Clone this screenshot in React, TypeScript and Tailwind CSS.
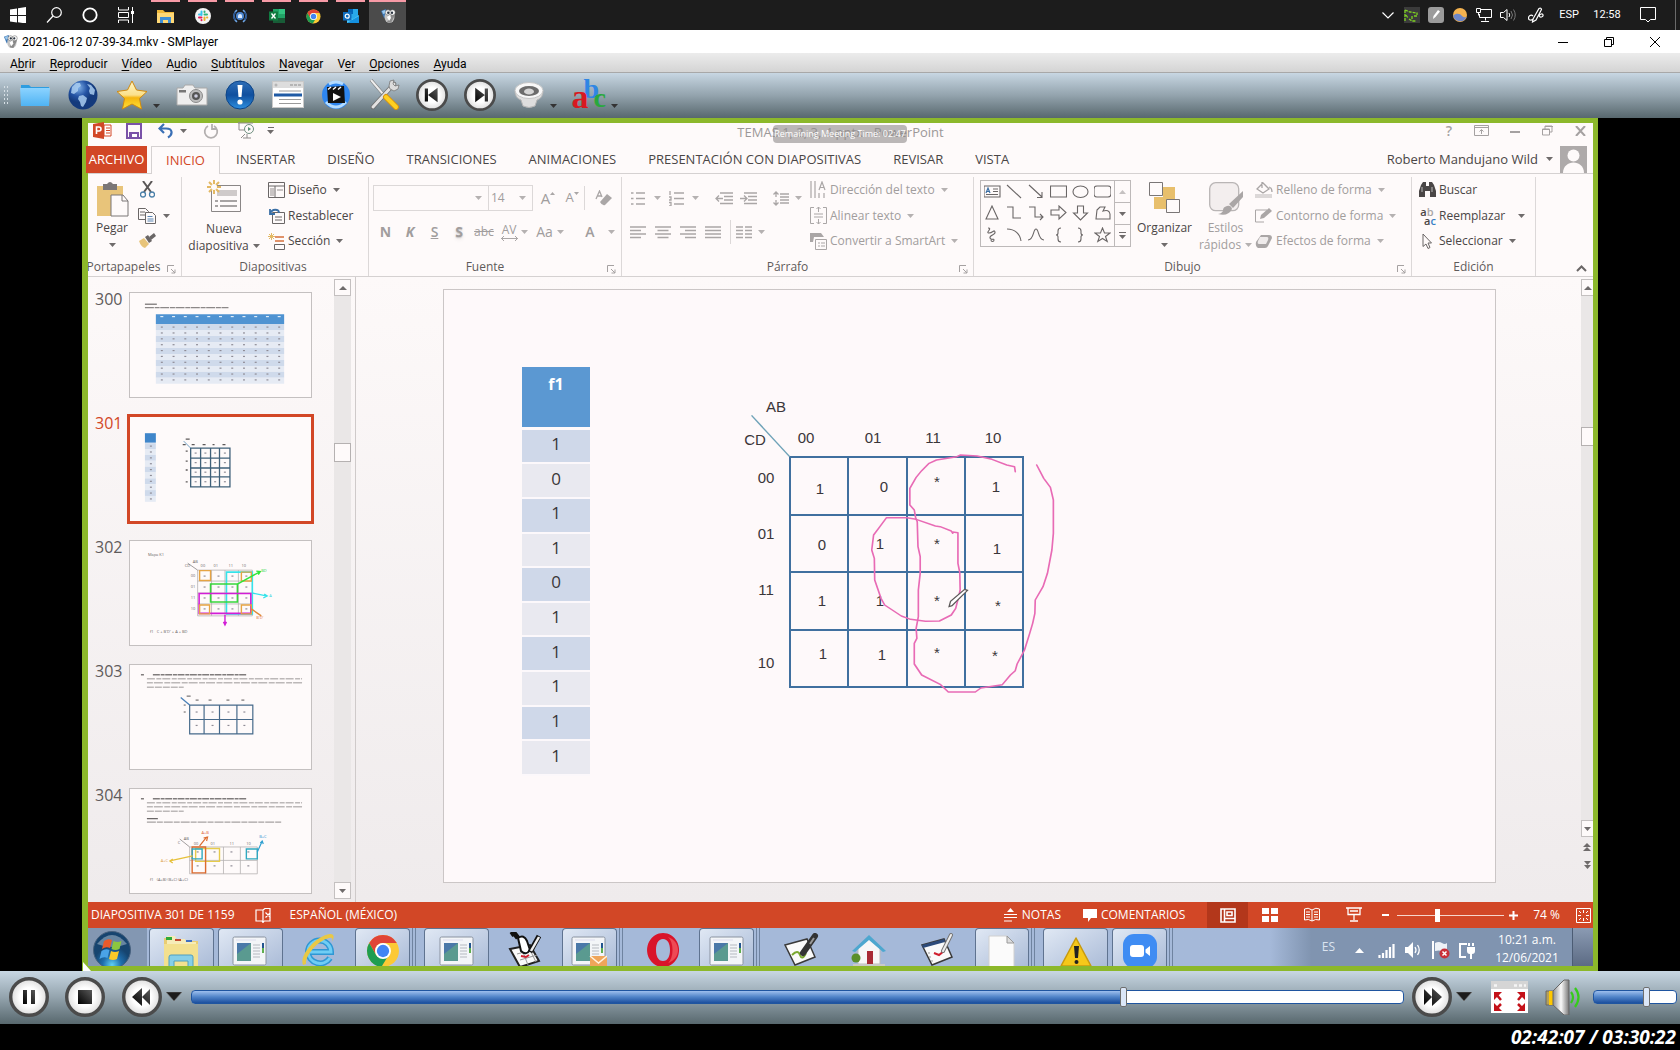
import React from "react";

type P = { children?: React.ReactNode; w?: number; h?: number; vb?: string; className?: string };

function Svg({ children, w = 16, h = 16, vb, className = "" }: P) {
  return (
    <svg width={w} height={h} viewBox={vb || `0 0 ${w} ${h}`} className={`shrink-0 ${className}`} fill="none" aria-hidden="true">
      {children}
    </svg>
  );
}

const Chev = ({ className = "text-[#6f6b6b]" }: { className?: string }) => (
  <Svg w={7} h={4} className={className}>
    <path d="M0 0h7L3.500 4z" fill="currentColor" />
  </Svg>
);

/* ---------- Windows 10 taskbar ---------- */

const SmpIcon = ({ s = 16 }: { s?: number }) => (
  <Svg w={s} h={s} vb="0 0 16 16">
    <path d="M1 3l5-2 2 6-4 3z" fill="#3f78b5" />
    <path d="M2 3l3-1 1 3-3 1z" fill="#9cc9ee" />
    <ellipse cx="9.500" cy="9" rx="5" ry="6" fill="#c4c4c4" />
    <path d="M7 14l6-10 2 3-4 8z" fill="#8a8a8a" />
    <circle cx="8" cy="4.500" r="2.700" fill="#f2f2f2" stroke="#555" strokeWidth=".5" />
    <circle cx="12.500" cy="4.500" r="2.700" fill="#fff" stroke="#555" strokeWidth=".5" />
    <circle cx="8.300" cy="4.700" r="1.200" fill="#2a3440" />
    <circle cx="12" cy="4.700" r="1.200" fill="#2a3440" />
    <path d="M7 9l3-2 1 3-2 3z" fill="#fff" />
  </Svg>
);

const ChromeIcon = ({ s = 16 }: { s?: number }) => (
  <Svg w={s} h={s} vb="0 0 32 32">
    <circle cx="16" cy="16" r="15" fill="#fcc934" />
    <path d="M3 8.500A15 15 0 0 1 29 8.500H16a7.500 7.500 0 0 0-6.500 11.200z" fill="#e04437" />
    <path d="M3 8.500A15 15 0 0 0 14.500 31l7-11.500A7.500 7.500 0 0 1 9.500 19.700z" fill="#1e9d52" />
    <circle cx="16" cy="16" r="7.500" fill="#fff" />
    <circle cx="16" cy="16" r="5.800" fill="#4285f4" />
  </Svg>
);

const pinned: { name: string; icon: React.ReactNode; active?: boolean }[] = [
  {
    name: "Explorador de archivos",
    icon: (
      <Svg w={17} h={15}>
        <path d="M0 1h6l2 2h9v11H0z" fill="#f0b93a" />
        <path d="M0 4h17v10H0z" fill="#ffd976" />
        <path d="M3 14V8h11v6h-3v-3H6v3z" fill="#3f8fd6" />
      </Svg>
    ),
  },
  {
    name: "Slack",
    icon: (
      <Svg>
        <circle cx="8" cy="8" r="8" fill="#f4f4f4" />
        <g strokeWidth="2" strokeLinecap="round">
          <path d="M6.500 3.500v3.500M4 6.500h1" stroke="#36c5f0" />
          <path d="M9.500 6.500H12M9.500 3.500v.5" stroke="#2eb67d" />
          <path d="M9.500 9.500V12M12 9.500h.3" stroke="#ecb22e" />
          <path d="M6.500 9.500H4M6.500 12v.3" stroke="#e01e5a" />
        </g>
      </Svg>
    ),
  },
  {
    name: "Monitor",
    icon: (
      <Svg>
        <path d="M5 2C1 5 1 11 5 14M11 2c4 3 4 9 0 12" stroke="#6fa8e8" strokeWidth="1.500" />
        <path d="M3.500 4c-2 3-2 6 0 8M12.500 4c2 3 2 6 0 8" stroke="#27508a" strokeWidth="1.500" />
        <circle cx="8" cy="8" r="4" fill="#4c86d0" />
        <path d="M6 8a2 2 0 0 1 4 0v2H6z" fill="#dcecff" />
      </Svg>
    ),
  },
  {
    name: "Excel",
    icon: (
      <Svg>
        <path d="M4 1h12v14H4z" fill="#21a366" />
        <path d="M10 1h6v5h-6z" fill="#33c481" />
        <path d="M4 10h12v5H4z" fill="#185c37" />
        <rect y="3.500" width="9" height="9" fill="#107c41" />
        <path d="M2.500 5.500l4 5M6.500 5.500l-4 5" stroke="#fff" strokeWidth="1.300" />
      </Svg>
    ),
  },
  { name: "Chrome", icon: <ChromeIcon s={15} /> },
  {
    name: "Outlook",
    icon: (
      <Svg>
        <path d="M5 1h10v10H5z" fill="#28a8ea" />
        <path d="M5 1h5v5H5z" fill="#0364b8" />
        <path d="M4 7l6 4 6-4v8H4z" fill="#50c8f5" />
        <path d="M4 15l12-7v7z" fill="#1490df" />
        <rect y="4" width="8.500" height="8.500" fill="#0f6cbd" />
        <circle cx="4.200" cy="8.200" r="2" stroke="#fff" strokeWidth="1.200" />
      </Svg>
    ),
  },
  { name: "SMPlayer", icon: <SmpIcon />, active: true },
];

function SystemBar() {
  const sys = "flex h-full w-9 items-center justify-center";
  const tray = "flex h-full w-6 items-center justify-center";
  return (
    <header className="flex h-[30px] shrink-0 items-center bg-[#1c1c1c] text-[11px] text-white">
      <button aria-label="Inicio" className={sys}>
        <Svg>
          <path d="M0 2.500l7-1V8H0zM8 1.300L16 0v8H8zM0 9h7v6.500l-7-1zM8 9h8v7.500L8 15.300z" fill="#fff" />
        </Svg>
      </button>
      <button aria-label="Buscar" className={sys}>
        <Svg>
          <circle cx="10.500" cy="5.500" r="4.800" stroke="#fff" strokeWidth="1.200" />
          <path d="M7 9l-6 6.500" stroke="#fff" strokeWidth="1.200" />
        </Svg>
      </button>
      <button aria-label="Cortana" className={sys}>
        <Svg>
          <circle cx="8" cy="8" r="6.700" stroke="#fff" strokeWidth="1.800" />
        </Svg>
      </button>
      <button aria-label="Vista de tareas" className={sys}>
        <Svg>
          <path d="M.5 0v3h10V0M.5 16v-3h10v3M.5 5.500h10v5H.5zM14.500 0v16" stroke="#fff" />
          <path d="M13 4h3v3h-3z" fill="#fff" />
        </Svg>
      </button>
      <nav className="ml-[3px] flex h-full">
        {pinned.map((p) => (
          <button
            key={p.name}
            aria-label={p.name}
            className={
              p.active
                ? "flex w-[37px] items-center justify-center border-t-2 border-[#f79aa6] bg-[#4b4b4b]"
                : "mx-1 flex w-[29px] items-center justify-center border-t-2 border-[#f79aa6]"
            }
          >
            {p.icon}
          </button>
        ))}
      </nav>
      <div className="ml-auto flex h-full items-center">
        <button aria-label="Iconos ocultos" className={tray}>
          <Svg w={12} h={7}>
            <path d="M.5 .5L6 6 11.500 .5" stroke="#fff" strokeWidth="1.200" />
          </Svg>
        </button>
        <span className={tray}>
          <Svg>
            <path d="M0 0h16v16H0z" fill="#3b3b3b" />
            <path d="M1 14V3M1 3l5 2 7 1 0 2M2 8l2 3M5 12l3 2h4M8 9v3M10 9h4" stroke="#7ed321" strokeWidth="1.300" strokeDasharray="3 1" />
          </Svg>
        </span>
        <span className={tray}>
          <Svg>
            <rect width="16" height="16" rx="3" fill="#9b9b9b" />
            <path d="M5 12l.5-3L10 3l2 1.500L7.500 10z" fill="#fff" />
          </Svg>
        </span>
        <span className={tray}>
          <Svg>
            <circle cx="8" cy="8" r="7" fill="#f4b350" />
            <path d="M1.200 8.500C4 6 8 6 10 9c1.500 1.500 3 1.500 4.500 1A7 7 0 0 1 1.200 8.500z" fill="#6c86c8" />
          </Svg>
        </span>
        <span className={tray}>
          <Svg>
            <path d="M5 2.500h10.500v8H3.500V7M.5 1.500h4v4h-4zM2.500 5.500v3M9.500 10.500v3M5 14.500h8" stroke="#fff" />
          </Svg>
        </span>
        <span className={tray}>
          <Svg>
            <path d="M.5 5.500h3l3.500-3v11l-3.500-3h-3z" stroke="#fff" />
            <path d="M9 6q1.500 2 0 4" stroke="#fff" />
            <path d="M11 4q3 4 0 8M13.500 2.500q3.500 5.500 0 11" stroke="#777" />
          </Svg>
        </span>
        <span className="flex h-full w-8 items-center justify-center">
          <Svg>
            <path d="M5 12L11 1.500q2-1 2.500 1L8 13l-3.500 2zM5 9C3 7 .5 9 .5 11s2 3 5 1M11 9c1-2 3.500-3 4-1s-3 3-4 1" stroke="#fff" strokeWidth="1.200" />
          </Svg>
        </span>
        <span className="w-[34px] text-center">ESP</span>
        <time className="w-[42px] text-center">12:58</time>
        <button aria-label="Notificaciones" className="ml-0.5 flex h-full w-9 items-center justify-center">
          <Svg>
            <path d="M.5 .5h15v12h-5L8 15l-2.500-2.500h-5z" stroke="#fff" />
          </Svg>
        </button>
        <div className="ml-[9px] mr-1 h-full w-px bg-[#6a6a6a]" />
      </div>
    </header>
  );
}

/* ---------- SMPlayer window chrome ---------- */

const menus: [string, string, string][] = [
  ["A", "b", "rir"],
  ["", "R", "eproducir"],
  ["", "V", "ídeo"],
  ["A", "u", "dio"],
  ["", "S", "ubtítulos"],
  ["", "N", "avegar"],
  ["V", "e", "r"],
  ["", "O", "pciones"],
  ["", "A", "yuda"],
];

function RoundFace({ children, s = 32 }: { children: React.ReactNode; s?: number }) {
  return (
    <Svg w={s} h={s} vb="0 0 40 40">
      <defs>
        <radialGradient id="face">
          <stop offset=".5" stopColor="#fff" />
          <stop offset="1" stopColor="#dcdcdc" />
        </radialGradient>
        <linearGradient id="glyph" x1="0" x2="1" y1="1" y2="0">
          <stop offset="0" stopColor="#000" />
          <stop offset="1" stopColor="#5a5a5a" />
        </linearGradient>
      </defs>
      <circle cx="20" cy="20" r="18.300" fill="url(#face)" stroke="#4b4b4b" strokeWidth="3.400" />
      {children}
    </Svg>
  );
}

const AbcIcon = () => (
  <span className="relative block h-8 w-8 font-['Liberation_Serif',serif] font-bold leading-none" aria-hidden="true">
    <span className="absolute left-2.5 -top-1 text-[28px] text-[#2f86e4]">b</span>
    <span className="absolute left-5 top-[5px] text-[28px] text-[#29a83c]">c</span>
    <span className="absolute -left-0.5 top-px text-[34px] text-[#d81820]">a</span>
  </span>
);

const tools: { name: string; drop?: boolean; icon: React.ReactNode }[] = [
  {
    name: "Abrir archivo",
    icon: (
      <Svg w={32} h={24}>
        <path d="M2 2h8l2 2h18v8H2z" fill="#2e9de0" />
        <path d="M1 5h30l-1 18H2z" fill="url(#fold)" />
        <defs>
          <linearGradient id="fold" x1="0" x2="0" y1="0" y2="1">
            <stop offset="0" stopColor="#8cd3ff" />
            <stop offset="1" stopColor="#4fb3f3" />
          </linearGradient>
        </defs>
      </Svg>
    ),
  },
  {
    name: "Abrir URL",
    icon: (
      <Svg w={30} h={30}>
        <defs>
          <radialGradient id="globe" cx=".35" cy=".25">
            <stop offset="0" stopColor="#7fb0e8" />
            <stop offset=".6" stopColor="#2453a4" />
            <stop offset="1" stopColor="#143a7c" />
          </radialGradient>
        </defs>
        <circle cx="15" cy="15" r="14.500" fill="url(#globe)" />
        <path d="M4 7l4-4 4 0 1 3-3 2 0 3-4 3-3-1zM11 16l4-1 4 3-1 4-3 5-2-1-1-4-2-3zM19 4l4 1 4 5-1 5-4-1-1-3 1-3z" fill="#a9cdf0" opacity=".85" />
      </Svg>
    ),
  },
  {
    name: "Favoritos",
    drop: true,
    icon: (
      <Svg w={32} h={32}>
        <defs>
          <linearGradient id="star" x1="0" x2="0" y1="0" y2="1">
            <stop offset="0" stopColor="#fff6c8" />
            <stop offset=".5" stopColor="#fbe08a" />
            <stop offset=".6" stopColor="#f5b50f" />
            <stop offset="1" stopColor="#ffe23a" />
          </linearGradient>
        </defs>
        <path d="M16 2l4.500 9L31 12.500l-7.500 7L25.500 30 16 25l-9.500 5 2-10.500L1 12.500 11.500 11z" fill="url(#star)" stroke="#d08a10" strokeLinejoin="round" />
      </Svg>
    ),
  },
  {
    name: "Captura",
    icon: (
      <Svg w={32} h={22}>
        <path d="M1 4h6l2-3h8l2 3h12v17H1z" fill="#eee" stroke="#a8a8a8" />
        <rect x="3" y="6" width="7" height="2.500" fill="#777" />
        <circle cx="20" cy="12" r="6.500" fill="#bdbdbd" stroke="#8b8b8b" />
        <circle cx="20" cy="12" r="4" fill="#555" />
        <circle cx="20" cy="12" r="1.800" fill="#ccd" />
      </Svg>
    ),
  },
  {
    name: "Información",
    icon: (
      <Svg w={30} h={30}>
        <defs>
          <linearGradient id="info" x1="0" x2="0" y1="0" y2="1">
            <stop offset="0" stopColor="#2f6fb8" />
            <stop offset=".5" stopColor="#0f4f9e" />
            <stop offset="1" stopColor="#2f90e0" />
          </linearGradient>
        </defs>
        <circle cx="15" cy="15" r="14" fill="url(#info)" stroke="#0c4488" />
        <path d="M12.500 5h5l-1 12h-3z" fill="#fff" />
        <circle cx="15" cy="22" r="2.600" fill="#fff" />
      </Svg>
    ),
  },
  {
    name: "Lista de reproducción",
    icon: (
      <Svg w={32} h={27}>
        <rect x=".5" y=".5" width="31" height="26" fill="#fff" stroke="#c9c9c9" />
        <path d="M1 1h30v6H1z" fill="#ddd" />
        <circle cx="4" cy="4" r="1.500" fill="#b5b5b5" />
        <path d="M18 4h11" stroke="#b5b5b5" strokeWidth="2" strokeDasharray="3 1" />
        <path d="M7 10h22M7 18.500h22M7 22.500h22" stroke="#9a9a9a" />
        <path d="M2 12.500h28v3H2z" fill="#1f5aa5" />
      </Svg>
    ),
  },
  {
    name: "Recortar vídeo",
    icon: (
      <Svg w={30} h={30}>
        <circle cx="15" cy="15" r="14" fill="#2e86f0" />
        <path d="M8 4q7-4 14 0M5 22q10 10 20 0" stroke="#b4dcff" strokeWidth="3" />
        <path d="M6 7l17-1 1 17H7z" fill="#111" />
        <path d="M7 9.500l3-2.500M12 9.500l3-2.500M17 9.500l3-2.500" stroke="#fff" strokeWidth="1.500" />
        <path d="M12 13l8 4-8 4z" fill="#fff" />
      </Svg>
    ),
  },
  {
    name: "Preferencias",
    icon: (
      <Svg w={31} h={31}>
        <path d="M2 1l12 14" stroke="#777" strokeWidth="3.200" />
        <path d="M2 1l12 14" stroke="#eee" strokeWidth="2" />
        <path d="M25 5L4 28" stroke="#6e6e6e" strokeWidth="4.500" strokeLinecap="round" />
        <path d="M25 5L4 28" stroke="#e2e2e2" strokeWidth="3" strokeLinecap="round" />
        <path d="M20 7l1-5 4-1-1 4 2 2 4-1-1 4-4 2-4-2z" fill="#ddd" stroke="#777" strokeWidth=".8" />
        <path d="M17 18l10 10" stroke="#d9940d" strokeWidth="6" strokeLinecap="round" />
        <path d="M17 18l10 10" stroke="#ffd021" strokeWidth="4" strokeLinecap="round" />
      </Svg>
    ),
  },
  {
    name: "Anterior",
    icon: (
      <RoundFace>
        <path d="M11 12h4v16h-4zM27 11v18L15 20z" fill="url(#glyph)" />
      </RoundFace>
    ),
  },
  {
    name: "Siguiente",
    icon: (
      <RoundFace>
        <path d="M26 12h4v16h-4zM14 11v18l12-9z" fill="url(#glyph)" />
      </RoundFace>
    ),
  },
  {
    name: "Pista de audio",
    drop: true,
    icon: (
      <Svg w={30} h={26}>
        <path d="M1 9q0 7 6 9l2 6q6 3 12 0l2-6q6-2 6-9z" fill="#dedede" stroke="#b5b5b5" />
        <ellipse cx="15" cy="8.500" rx="14" ry="8" fill="#f8f8f8" stroke="#c5c5c5" />
        <ellipse cx="15" cy="9" rx="10" ry="5" fill="#6c6c6c" />
        <ellipse cx="15" cy="9.500" rx="5" ry="3" fill="#d5d5d5" />
      </Svg>
    ),
  },
  { name: "Subtítulos", drop: true, icon: <AbcIcon /> },
];

function PlayerChrome() {
  return (
    <>
      <div className="flex h-[23px] shrink-0 items-center bg-white pl-[3px] text-xs text-black">
        <SmpIcon s={15} />
        <h1 className="ml-1">2021-06-12 07-39-34.mkv - SMPlayer</h1>
        <div className="ml-auto flex h-full pr-0.5">
          <button aria-label="Minimizar" className="flex w-[46px] items-center justify-center">
            <Svg w={10} h={10}>
              <path d="M0 5.500h10" stroke="#000" />
            </Svg>
          </button>
          <button aria-label="Restaurar" className="flex w-[46px] items-center justify-center">
            <Svg w={10} h={10}>
              <path d="M.5 2.500h7v7h-7zM2.500 2.500v-2h7v7h-2" stroke="#000" />
            </Svg>
          </button>
          <button aria-label="Cerrar" className="flex w-[46px] items-center justify-center">
            <Svg w={10} h={10}>
              <path d="M0 0l10 10M10 0L0 10" stroke="#000" />
            </Svg>
          </button>
        </div>
      </div>
      <nav className="flex h-5 shrink-0 items-center gap-[14px] border-b border-[#a8a8a8] bg-linear-to-b from-[#ececec] to-[#d4d4d4] pl-[10px] pt-0.5 text-xs text-black">
        {menus.map(([a, b, c]) => (
          <button key={a + b + c}>
            {a}
            <span className="underline underline-offset-2">{b}</span>
            {c}
          </button>
        ))}
      </nav>
      <div className="flex h-[45px] shrink-0 items-center bg-linear-to-b from-[#c8d7e3] via-[#93a3ad] to-[#58686e] pb-0.5">
        <div className="ml-[3px] mr-0.5 h-5 w-1.5 bg-[radial-gradient(#d6dfe5_1px,transparent_1px)] bg-[length:3px_4px]" />
        {tools.map((t) => (
          <button
            key={t.name}
            aria-label={t.name}
            className={t.drop ? "relative flex h-8 w-[61px] items-center justify-center pr-3" : "flex h-8 w-12 items-center justify-center"}
          >
            {t.icon}
            {t.drop && (
              <span className="absolute bottom-[3px] right-2">
                <Chev className="text-[#333]" />
              </span>
            )}
          </button>
        ))}
      </div>
    </>
  );
}

/* ---------- PowerPoint: title and tabs ---------- */

function PptTitle() {
  const b = "flex w-[33px] items-center justify-center";
  return (
    <div className="relative flex h-[23px] shrink-0 items-center pb-2 pl-[5px] text-[#8f8b8b]">
      <Svg w={19} h={17}>
        <path d="M0 2l11-2v17L0 15z" fill="#d24726" />
        <path d="M11 3h7v11h-7z" fill="#fff" stroke="#d24726" />
        <path d="M13 6h4M13 8.500h4M13 11h4" stroke="#d24726" />
        <path d="M3.500 12V5h2.500a2 2 0 0 1 0 4H3.500" stroke="#fff" strokeWidth="1.600" />
      </Svg>
      <button aria-label="Guardar" className="ml-[14px]">
        <Svg>
          <path d="M1 1h14v14H1z" stroke="#7a52a8" strokeWidth="2" />
          <path d="M3 9h10v6H3z" fill="#7a52a8" />
          <path d="M6 11h5v3H6z" fill="#fff" />
        </Svg>
      </button>
      <button aria-label="Deshacer" className="ml-4 flex items-center gap-1.5">
        <Svg>
          <path d="M6 1L1.500 5.500 6 10M2 5.500h6c7 0 7 6 2 9" stroke="#3a6fb5" strokeWidth="2.200" />
        </Svg>
        <Chev />
      </button>
      <button aria-label="Repetir" className="ml-4">
        <Svg>
          <path d="M5 3a6.300 6.300 0 1 0 6 0M9 1v5h5" stroke="#b3afaf" strokeWidth="1.800" />
        </Svg>
      </button>
      <button aria-label="Presentación" className="ml-[18px]">
        <Svg w={18} h={17}>
          <path d="M2 0v8h6M1 1h15M8 12l-4 4M6 16h8M10 12v4" stroke="#8f8b8b" />
          <circle cx="12" cy="7" r="4.500" fill="#fefafa" stroke="#6f8f80" />
          <path d="M11 5l3 2-3 2z" fill="#5a8f75" />
        </Svg>
      </button>
      <button aria-label="Personalizar" className="ml-3 flex flex-col items-center gap-0.5">
        <span className="h-px w-[6px] bg-[#6f6b6b]" />
        <Chev />
      </button>
      <h2 className="absolute left-1/2 top-0 -translate-x-1/2 whitespace-nowrap text-[13px] leading-[18px] text-[#9c9898]">TEMAS 1, 2, 3, 4.pptx - PowerPoint</h2>
      <div className="absolute left-[685px] top-0.5 flex h-[18px] w-[134px] items-center justify-center whitespace-nowrap rounded bg-[#8d8a8a]/60 text-[9px] text-white">
        Remaining Meeting Time: 02:47
      </div>
      <div className="-mr-1 ml-auto flex items-center text-[#a5a1a1]">
        <button className="w-[32px] text-sm font-semibold leading-4" aria-label="Ayuda">
          ?
        </button>
        <button className={b} aria-label="Opciones de cinta">
          <Svg w={15} h={11}>
            <path d="M.5 .5h14v10H.5zM.5 2.500h14M7.500 9V5M5.500 6.500l2-2 2 2" stroke="currentColor" />
          </Svg>
        </button>
        <button className={b} aria-label="Minimizar presentación">
          <Svg w={10} h={10}>
            <path d="M0 6h10" stroke="currentColor" strokeWidth="2" />
          </Svg>
        </button>
        <button className={b} aria-label="Restaurar presentación">
          <Svg w={11} h={11}>
            <path d="M.5 4h7v6h-7zM3 4V1h7v6H8M0 4.500h8M3 1.500h8" stroke="currentColor" />
          </Svg>
        </button>
        <button className={b} aria-label="Cerrar presentación">
          <Svg w={11} h={10}>
            <path d="M1 0l9 10M10 0L1 10" stroke="currentColor" strokeWidth="2" />
          </Svg>
        </button>
      </div>
    </div>
  );
}

function PptTabs() {
  return (
    <nav className="flex h-[28px] shrink-0 border-b border-[#d5d1d1] text-[13px] text-[#4a4646]">
      <button className="-ml-0.5 w-[61px] overflow-hidden whitespace-nowrap bg-[#d24726] text-white">ARCHIVO</button>
      <button className="-mb-px ml-1 w-[69px] border border-b-0 border-[#d5d1d1] bg-[#fefafa] text-[#d24726]">INICIO</button>
      <div className="ml-4 flex gap-8">
        <button>INSERTAR</button>
        <button>DISEÑO</button>
        <button>TRANSICIONES</button>
        <button>ANIMACIONES</button>
        <button>PRESENTACIÓN CON DIAPOSITIVAS</button>
        <button>REVISAR</button>
        <button>VISTA</button>
      </div>
      <div className="ml-auto flex items-center pr-[6px]">
        <button className="flex items-center gap-2">
          Roberto Mandujano Wild
          <Chev />
        </button>
        <Svg w={27} h={27} className="ml-[7px]">
          <path d="M0 0h27v27H0z" fill="#aeaaaa" />
          <circle cx="13.500" cy="9.500" r="6" fill="#fefafa" />
          <path d="M3 27c0-14 21-14 21 0z" fill="#fefafa" />
        </Svg>
      </div>
    </nav>
  );
}

/* ---------- PowerPoint: ribbon ---------- */

function Group({ label, className, launcher, children }: { label: string; className: string; launcher?: boolean; children: React.ReactNode }) {
  return (
    <section className={`relative flex shrink-0 flex-col border-r border-[#dcd8d8] ${className}`}>
      <div className="flex h-[77px] shrink-0">{children}</div>
      <div className="flex h-[22px] shrink-0 items-center justify-center pt-1 text-[#5f5b5b]">
        {label}
        {launcher && (
          <button aria-label={`Opciones de ${label}`} className="absolute bottom-0.5 right-[5px]">
            <Svg w={9} h={9}>
              <path d="M.5 7V.5H7M4 4l4 4M8 4.500V8H4.500" stroke="#a5a1a1" />
            </Svg>
          </button>
        )}
      </div>
    </section>
  );
}

function Row({ icon, label, drop, off, wide }: { icon: React.ReactNode; label: string; drop?: boolean; off?: boolean; wide?: boolean }) {
  return (
    <button className={`flex h-[26px] items-center whitespace-nowrap ${off ? "text-[#a19d9d]" : "text-[#4a4646]"}`}>
      <span className="mr-[3px] flex w-[18px] justify-center">{icon}</span>
      {label}
      {drop && <Chev className={`${wide ? "ml-[13px]" : "ml-1.5"} ${off ? "text-[#b5b1b1]" : "text-[#6f6b6b]"}`} />}
    </button>
  );
}

const G = "#aaa6a6";
const D = "#6a6666";

const Lines = ({ d, w = 16 }: { d: string; w?: number }) => (
  <Svg w={w} h={15}>
    <path d={d} stroke={G} strokeWidth="1.300" />
  </Svg>
);

const Sep = () => <span className="h-6 w-px shrink-0 bg-[#dcd8d8]" />;

const shapes: string[] = [
  "M0 2h16v11H0zM9 5h5M9 7.500h5M2 10.500h12",
  "M1 1l14 13",
  "M1 1l13 12M14 8v5.500H9",
  "M.5 2h16v11H.5z",
  "M8.500 2c10 0 10 11.500 0 11.500s-10-11.500 0-11.500z",
  "M3 2h11q3 0 3 3v5q0 3-3 3H3q-3 0-3-3V5q0-3 3-3z",
  "M8 1l6 13H2z",
  "M1 2h6v11h8",
  "M1 2h6v10h8M12 9l3 3-3 3",
  "M1 5h8V1l7 6.500L9 14v-4H1z",
  "M5.500 1h6v7h4L8.500 15 1.500 8h4z",
  "M3 5l3-3 5 0-2 4q6-2 7 3v5H2z",
  "M4 1c5 0-3 5 1 5s5-4 6-1-6 3-5 6 4 0 4 2-3 2-3 0",
  "M1 2c8 0 13 5 14 12",
  "M0 13c6 0 5-11 8-11s2 11 8 11",
  "M11 1q-3 0-3 3v2q0 2-2 2 2 0 2 2v2q0 3 3 3",
  "M6 1q3 0 3 3v2q0 2 2 2-2 0-2 2v2q0 3-3 3",
  "M8.500 1l2 5h5.500l-4.500 3.500 1.700 5-4.700-3-4.700 3 1.700-5L1 6h5.500z",
];

function Ribbon() {
  const cell = "flex h-8 shrink-0 items-center justify-center";
  return (
    <div className="flex h-[103px] shrink-0 overflow-hidden border-b border-[#d5d1d1] pt-[3px] text-xs text-[#4a4646]">
      <Group label="Portapapeles" className="w-[94px] [&>div:last-child]:pr-[22px]" launcher>
        <button className="ml-[6px] flex w-[36px] flex-col items-center pt-[5px]">
          <Svg w={33} h={35}>
            <path d="M1 4h26v30H1z" fill="#e8c47a" />
            <path d="M7 2h4q3-4 6 0h4v6H7z" fill="#7a7676" />
            <path d="M15 13h12l5 6v15H15z" fill="#fefafa" stroke="#7a7676" />
            <path d="M26 13v6h6" stroke="#7a7676" />
          </Svg>
          <span className="mt-0.5 leading-[18px]">Pegar</span>
          <Chev className="mt-1.5 text-[#6f6b6b]" />
        </button>
        <div className="ml-2 flex flex-col">
          <button aria-label="Cortar" className="flex h-[26px] w-[18px] items-center justify-center">
            <Svg w={15} h={17}>
              <path d="M3 0l8 11M12 0L4 11" stroke="#5a5656" strokeWidth="2" />
              <circle cx="3" cy="13.500" r="2.500" stroke="#4a7fa8" strokeWidth="1.300" />
              <circle cx="12" cy="13.500" r="2.500" stroke="#4a7fa8" strokeWidth="1.300" />
            </Svg>
          </button>
          <button aria-label="Copiar" className="flex h-[26px] items-center gap-[7px]">
            <Svg w={18} h={16}>
              <path d="M.5 .5h7l3 3v8H.5zM2 4h5M2 7h5" stroke={D} />
              <path d="M7.500 4.500h7l3 3v8h-10z" fill="#fefafa" stroke={D} />
              <path d="M9.500 8.500h5M9.500 11h6M9.500 13h6" stroke="#5a86b5" />
            </Svg>
            <Chev />
          </button>
          <button aria-label="Copiar formato" className="flex h-[26px] w-[18px] items-center justify-center">
            <Svg w={18} h={16}>
              <path d="M1 8l5-3 5 6-4 4q-4-1-6-7z" fill="#e8c47a" />
              <path d="M7 4l3-2 4 6-3 2z" fill="#6a6666" />
              <path d="M11 4l5-4 2 3-5 4z" fill="#6a6666" />
            </Svg>
          </button>
        </div>
      </Group>

      <Group label="Diapositivas" className="w-[187px] [&>div:last-child]:pr-1" launcher={false}>
        <button className="ml-1 flex w-[76px] flex-col items-center pt-[3px]">
          <Svg w={34} h={32}>
            <path d="M4.500 5.500h29v26h-29z" fill="#fefafa" stroke="#8a8686" />
            <path d="M10 10h20v6H10z" fill="#cfcaca" />
            <path d="M8 21h3M13 21h17M8 26h3M13 26h17" stroke="#8a8686" strokeWidth="1.500" />
            <path d="M7 0v14M0 7h14M2 2l10 10M12 2L2 12" stroke="#e3b863" strokeWidth="2" />
            <circle cx="7" cy="7" r="3" fill="#fefafa" />
          </Svg>
          <span className="mt-2 leading-[18px]">Nueva</span>
          <span className="flex items-center gap-1 whitespace-nowrap leading-4">
            diapositiva <Chev />
          </span>
        </button>
        <div className="ml-[5px] flex flex-col">
          <Row
            label="Diseño"
            drop
            icon={
              <Svg w={17} h={16}>
                <path d="M.5 .5h16v15H.5zM.5 4h16M7 4v11" stroke={D} />
                <path d="M2 6h4v8H2zM9 7h6v2H9z" fill="#c9c4c4" />
              </Svg>
            }
          />
          <Row
            label="Restablecer"
            icon={
              <Svg w={17} h={16}>
                <path d="M4.500 4.500h12v11h-12zM7 9h7M7 12h7" stroke={D} />
                <path d="M2 1v5h5M2 6c2-6 9-5 9-1" stroke="#3a6fa5" strokeWidth="1.800" />
              </Svg>
            }
          />
          <Row
            label="Sección"
            drop
            icon={
              <Svg w={17} h={17}>
                <path d="M7 3h9v2H7zM7 7h9v2H7z" fill="#e0926a" />
                <path d="M6.500 11.500h10v5h-10z" stroke={D} />
                <path d="M3.500 0v7M0 3.500h7M1 1l5 5M6 1L1 6" stroke="#e3b863" />
              </Svg>
            }
          />
        </div>
      </Group>

      <Group label="Fuente" className="w-[253px] [&>div:last-child]:pr-5" launcher>
        <div className="flex flex-col pl-1 pt-1 text-[#a19d9d]">
          <div className="flex h-[34px] items-center">
            <label className="relative flex h-[26px] w-[116px] items-center border border-[#dcd8d8]">
              <select aria-label="Fuente" disabled className="h-full w-full appearance-none bg-transparent">
                <option></option>
              </select>
              <span className="absolute right-1.5">
                <Chev className="text-[#b5b1b1]" />
              </span>
            </label>
            <label className="relative -ml-px flex h-[26px] w-[45px] items-center border border-[#dcd8d8]">
              <select aria-label="Tamaño de fuente" disabled className="h-full w-full appearance-none bg-transparent pl-0.5 text-[#a19d9d] opacity-100">
                <option>14</option>
              </select>
              <span className="absolute right-1.5">
                <Chev className="text-[#b5b1b1]" />
              </span>
            </label>
            <button className={`${cell} ml-[3px] w-6 text-[15px]`}>
              A
              <Svg w={5} h={3} className="mb-2.5">
                <path d="M0 3h5L2.500 0z" fill={G} />
              </Svg>
            </button>
            <button className={`${cell} w-6 text-[13px]`}>
              A
              <Svg w={5} h={3} className="mb-2.5">
                <path d="M0 0h5L2.500 3z" fill={G} />
              </Svg>
            </button>
            <Sep />
            <button aria-label="Borrar formato" className={`${cell} ml-2 w-5`}>
              <Svg w={17} h={16}>
                <path d="M1 9l3.500-8L7 7M2.500 6h4" stroke={G} strokeWidth="1.300" />
                <path d="M5 12l7-8 5 4-7 7q-3 1-5-3z" fill={G} />
              </Svg>
            </button>
          </div>
          <div className="flex h-[34px] items-center text-sm">
            <button className={`${cell} w-[25px] font-bold`}>N</button>
            <button className={`${cell} w-[24px] font-bold italic`}>K</button>
            <button className={`${cell} w-[25px] font-semibold underline`}>S</button>
            <button className={`${cell} w-[24px] font-bold text-shadow-md`}>S</button>
            <button className={`${cell} w-[26px] text-xs line-through`}>abc</button>
            <button className={`${cell} w-[24px]`} aria-label="Espaciado">
              <span className="flex flex-col items-center text-xs leading-3">
                AV
                <Svg w={17} h={5}>
                  <path d="M0 2.500h17M3 0L.5 2.500 3 5M14 0l2.500 2.500L14 5" stroke={G} />
                </Svg>
              </span>
            </button>
            <Chev className="text-[#b5b1b1]" />
            <button className={`${cell} ml-1 w-[25px]`}>Aa</button>
            <Chev className="text-[#b5b1b1]" />
            <span className="ml-2.5">
              <Sep />
            </span>
            <button className={`${cell} ml-1 w-6 font-semibold`}>A</button>
            <Chev className="ml-1.5 text-[#b5b1b1]" />
          </div>
        </div>
      </Group>

      <Group label="Párrafo" className="w-[352px] [&>div:last-child]:pr-5" launcher>
        <div className="flex w-[187px] flex-col pl-2 pt-1">
          <div className="flex h-[34px] items-center">
            <button aria-label="Viñetas" className="flex items-center gap-2">
              <Lines d="M6 2h9M6 7.500h9M6 13h9M1 2h2.500M1 7.500h2.500M1 13h2.500" />
              <Chev className="text-[#b5b1b1]" />
            </button>
            <button aria-label="Numeración" className="ml-[7px] flex items-center gap-2">
              <Lines d="M6 2h10M6 7.500h10M6 13h10M2 0v4M1 6h2v3H1M1 11.500h2V15H1" />
              <Chev className="text-[#b5b1b1]" />
            </button>
            <span className="ml-2">
              <Sep />
            </span>
            <button aria-label="Disminuir sangría" className="ml-2">
              <Lines w={18} d="M5 2h13M9 5.500h9M9 9h9M5 12.500h13M1 7.500h7M4 4.500l-3 3 3 3" />
            </button>
            <button aria-label="Aumentar sangría" className="ml-1.5">
              <Lines w={18} d="M5 2h13M9 5.500h9M9 9h9M5 12.500h13M1 7.500h7M5 4.500l3 3-3 3" />
            </button>
            <span className="ml-[7px]">
              <Sep />
            </span>
            <button aria-label="Interlineado" className="ml-[9px] flex items-center gap-1.5">
              <Lines d="M7 3h9M7 6h9M7 9h9M7 12h9M3 1v5M3 14V9M.5 3.500L3 1l2.500 2.500M.5 11.500L3 14l2.500-2.500" />
              <Chev className="text-[#b5b1b1]" />
            </button>
          </div>
          <div className="flex h-[34px] items-center gap-[9px]">
            <button aria-label="Alinear a la izquierda">
              <Lines d="M0 2h16M0 5.500h11M0 9h16M0 12.500h11" />
            </button>
            <button aria-label="Centrar">
              <Lines d="M0 2h16M2.500 5.500h11M0 9h16M2.500 12.500h11" />
            </button>
            <button aria-label="Alinear a la derecha">
              <Lines d="M0 2h16M5 5.500h11M0 9h16M5 12.500h11" />
            </button>
            <button aria-label="Justificar">
              <Lines d="M0 2h16M0 5.500h16M0 9h16M0 12.500h16" />
            </button>
            <Sep />
            <button aria-label="Columnas" className="-ml-1 flex items-center gap-1.5">
              <Lines d="M0 2h7M9 2h7M0 5.500h7M9 5.500h7M0 9h7M9 9h7M0 12.500h7M9 12.500h7" />
              <Chev className="text-[#b5b1b1]" />
            </button>
          </div>
        </div>
        <div className="flex flex-col">
          <Row
            off
            drop
            label="Dirección del texto"
            icon={
              <Svg w={17} h={17}>
                <path d="M1 0v17M5 0v17M9 12v5M14 12v5M9 9l3-8 3 8M10 6.500h4" stroke={G} strokeWidth="1.200" />
              </Svg>
            }
          />
          <Row
            off
            drop
            label="Alinear texto"
            icon={
              <Svg w={17} h={17}>
                <path d="M4 .5H.5v16H4M13 .5h3.500v16H13M4 7h9M4 10h9M8.500 5V0M6.500 2l2-2 2 2M8.500 12v5M6.500 15l2 2 2-2" stroke={G} />
              </Svg>
            }
          />
          <Row
            off
            drop
            label="Convertir a SmartArt"
            icon={
              <Svg w={17} h={17}>
                <path d="M0 0h11l3 4H4L3 9H0z" fill={G} />
                <path d="M5.500 6.500h11v10h-11zM8 10h2M11 10h4M8 13h2M11 13h4" stroke={G} />
              </Svg>
            }
          />
        </div>
      </Group>

      <Group label="Dibujo" className="w-[438px] [&>div:last-child]:pr-5" launcher>
        <div className="ml-[6px] mt-[3px] flex h-[67px] w-[151px] border border-[#bdb9b9]">
          <div className="grid flex-1 grid-cols-6 grid-rows-3 place-items-center">
            {shapes.map((d, i) => (
              <button key={i} aria-label={`Forma ${i + 1}`}>
                <Svg w={17} h={16}>
                  <path d={d} stroke={D} strokeWidth="1.100" />
                  {i === 0 && <path d="M2 9l2-5 2 5M2.700 7.500h2.600" stroke="#3a6fa5" strokeWidth="1.200" />}
                </Svg>
              </button>
            ))}
          </div>
          <div className="flex w-[16px] flex-col divide-y divide-[#bdb9b9] border-l border-[#bdb9b9]">
            <button aria-label="Formas anteriores" className="flex flex-1 items-center justify-center">
              <Svg w={7} h={4}>
                <path d="M0 4h7L3.500 0z" fill="#c5c1c1" />
              </Svg>
            </button>
            <button aria-label="Formas siguientes" className="flex flex-1 items-center justify-center">
              <Chev />
            </button>
            <button aria-label="Todas las formas" className="flex flex-1 flex-col items-center justify-center gap-0.5">
              <span className="h-px w-[7px] bg-[#6f6b6b]" />
              <Chev />
            </button>
          </div>
        </div>
        <button className="flex w-[67px] flex-col items-center pt-[5px]">
          <Svg w={31} h={31}>
            <path d="M14 5h12v13H14zM5 15h12v12H5z" fill="#e8bf6c" />
            <path d="M.5 .5h13v13H.5zM17.500 17.500h13v13h-13z" fill="#fefafa" stroke="#7a7676" />
          </Svg>
          <span className="mt-1.5 leading-[18px]">Organizar</span>
          <Chev className="mt-1.5 text-[#6f6b6b]" />
        </button>
        <button className="-ml-0.5 flex w-[59px] flex-col items-center pt-[5px] text-[#a19d9d]">
          <Svg w={34} h={34}>
            <rect x=".7" y=".7" width="29" height="28" rx="6" fill="#f3eeee" stroke="#b9b5b5" strokeWidth="1.300" />
            <path d="M34 9L20 22l4 4 10-11zM18 24q4-1 5 3-4 8-14 5 5-1 5-4t4-4z" fill="#aaa6a6" />
          </Svg>
          <span className="mt-[3px] leading-[18px]">Estilos</span>
          <span className="flex items-center gap-1 leading-4">
            rápidos <Chev className="text-[#b5b1b1]" />
          </span>
        </button>
        <div className="flex flex-col">
          <Row
            off
            drop
            label="Relleno de forma"
            icon={
              <Svg w={18} h={17}>
                <path d="M2 8l6-6 6 6-6 4zM7 1v6M14 6q3 1 3 5" stroke={G} strokeWidth="1.300" />
                <path d="M0 13h17v4H0z" fill="#dcd8d8" />
              </Svg>
            }
          />
          <Row
            off
            drop
            label="Contorno de forma"
            icon={
              <Svg w={18} h={16}>
                <path d="M12 2H.5v12H9" stroke={G} />
                <path d="M5 11l1-4 8-7 3 3-8 7z" fill={G} />
              </Svg>
            }
          />
          <Row
            off
            drop
            label="Efectos de forma"
            icon={
              <Svg w={18} h={15}>
                <path d="M1 8l5-7h8q3 0 3 3l-4 8q-1 2-3 2H3q-3-2-2-6z" fill={G} />
                <path d="M5 3h7q2 0 1 3l-2 4H4q-2 0-1-3z" fill="#efebeb" />
              </Svg>
            }
          />
        </div>
      </Group>

      <Group label="Edición" className="w-[124px]">
        <div className="ml-[6px] flex flex-col">
          <Row
            label="Buscar"
            icon={
              <Svg w={17} h={15}>
                <path d="M2 3l2-3h3v4h3V0h3l2 3 2 6v6h-6V9H6v6H0V9z" fill="#4a4646" />
                <path d="M3 5v5M13 5v5" stroke="#bbb" />
              </Svg>
            }
          />
          <Row
            label="Reemplazar"
            drop
            wide
            icon={
              <span className="flex flex-col text-[11px] font-semibold leading-[9px]" aria-hidden="true">
                <span>
                  a<span className="text-[#aaa6a6]">b</span>
                </span>
                <span className="pl-1.5">
                  a<span className="text-[#3a7fc5]">c</span>
                </span>
              </span>
            }
          />
          <Row
            label="Seleccionar"
            drop
            icon={
              <Svg w={11} h={16}>
                <path d="M1 1l8.500 9H6l2 4.500-2 1L4 11l-3 2.500z" stroke={D} />
              </Svg>
            }
          />
        </div>
      </Group>
      <button aria-label="Contraer la cinta" className="ml-auto mr-1.5 self-end pb-1">
        <Svg w={11} h={7}>
          <path d="M1 6l4.500-4.500L10 6" stroke="#6a6666" strokeWidth="2" />
        </Svg>
      </button>
    </div>
  );
}

/* ---------- PowerPoint: slide thumbnails ---------- */

const txt = (x: number, y: number, t: string, c = "#6a6666") => (
  <text x={x} y={y} fontSize="4" fill={c}>
    {t}
  </text>
);

const Para = () => (
  <g stroke="#bcb8b8" strokeWidth="1.500">
    <path d="M11 9.500h3M23 9.500h94" stroke="#807c7c" strokeDasharray="7 .8 4 .6" />
    <path d="M17 13.500h156" strokeDasharray="8 1.500 5 1" />
    <path d="M17 17.500h156" strokeDasharray="6 1 9 1.500" />
    <path d="M17 22h37" strokeDasharray="7 1" />
  </g>
);

const marks = (x0: number, y0: number, dx: number, dy: number, nx: number, ny: number) =>
  Array.from({ length: nx * ny }, (_, i) => (
    <path key={i} d={`M${x0 + (i % nx) * dx} ${y0 + Math.floor(i / nx) * dy}h2`} stroke="#8f8c96" strokeWidth="1.200" />
  ));

const T300 = (
  <>
    <path d="M15 11h12" stroke="#7c7878" strokeWidth="1.300" />
    <path d="M15 14.500h84" stroke="#8c8888" strokeWidth="1.300" strokeDasharray="9 .8 5 .6" />
    <path d="M26 21h129v10H26z" fill="#4f93d2" />
    {Array.from({ length: 10 }, (_, i) => (
      <path key={i} d={`M26 ${31 + i * 6}h129v6H26z`} fill={i % 2 ? "#e6ebf4" : "#cfdaeb"} />
    ))}
    {marks(31, 34, 11.8, 5.9, 11, 10)}
    {Array.from({ length: 11 }, (_, i) => (
      <path key={i} d={`M${30.5 + i * 11.8} 23.500h3`} stroke="#fff" />
    ))}
  </>
);

const T301 = (
  <>
    <path d="M15 16h11v9.500H15z" fill="#3f86ca" />
    {Array.from({ length: 10 }, (_, i) => (
      <path key={i} d={`M15 ${26 + i * 5.9}h11v5.900H15z`} fill={i % 2 ? "#e6ebf4" : "#cfdaeb"} />
    ))}
    {marks(20, 29, 1, 5.9, 1, 10)}
    <path d="M61 31h39.500v39H61zM71 31v39M81 31v39M90 31v39M61 41h39.500M61 51h39.500M61 60h39.500" stroke="#3f6079" strokeWidth="1.300" />
    <path d="M54 24l7 7" stroke="#6f9fc5" />
    {marks(65, 36, 9.8, 9.6, 4, 4)}
    <path d="M56 22h4M53 27.500h3M62 27.500h3M73 27.500h3M83 27.500h2M93 27.500h3M56 34h2M56 44h2M56 53h2M56 65h2" stroke="#5c5858" strokeWidth="1.300" />
  </>
);

const T302 = (
  <>
    {txt(18, 15, "Mapa K1")}
    <path d="M68 29h55v46H68zM82 29v46M95.500 29v46M109 29v46M68 40h55M68 52h55M68 63h55" stroke="#b5b1b1" strokeWidth=".8" />
    <path d="M58 22l10 7" stroke="#8a8686" strokeWidth=".8" />
    {marks(74, 35, 14, 11, 4, 4)}
    {txt(63, 22, "AB")}
    {txt(55, 26, "CD")}
    {["00", "01", "11", "10"].map((t, i) => (
      <React.Fragment key={t}>
        {txt([71, 84, 99, 112][i], 26, t)}
        {txt(61, 36 + i * 11, t)}
      </React.Fragment>
    ))}
    <path d="M97 31h26v42H97z" stroke="#35e3ea" strokeWidth="1.600" />
    <path d="M81 43h27v18H81z" stroke="#38d63c" strokeWidth="1.600" />
    <path d="M69.500 52.500h52v20h-52z" stroke="#d21ed6" strokeWidth="1.600" />
    <path d="M70 29.500h11v10H70zM112 31h10v9h-10zM70 64h10v9H70zM112 64h10v9h-10z" stroke="#e6a443" strokeWidth="1.400" />
    <path d="M108 43l22-12M127 30l4 .5-2 3" stroke="#2ee63a" strokeWidth="1.400" />
    <path d="M123 52l14 3M135 53l3 2-4 2" stroke="#35e3ea" strokeWidth="1.300" />
    <path d="M95.500 74v10M94 81l1.500 3 1.500-3" stroke="#d21ed6" strokeWidth="1.400" />
    <path d="M122 68l10 7" stroke="#e08a3a" strokeWidth="1.400" />
    {txt(132, 31, "BD", "#2ed63a")}
    {txt(140, 56, "A", "#35d3da")}
    {txt(127, 78, "B'D'", "#e0743a")}
    {txt(20, 92, "f1= C + B'D' + A + BD")}
  </>
);

const T303 = (
  <>
    <Para />
    <path d="M60 40h63.500v29H60zM74.500 40v29M90 40v29M107.500 40v29M60 54.500h63.500" stroke="#46698a" strokeWidth="1.200" />
    <path d="M51 32.500l9 7.500" stroke="#4a80b8" strokeWidth="1.300" />
    {marks(66, 47, 16, 13.5, 4, 2)}
    <path d="M57 31h4M66 35h3M79 35h3M97 35h3M112 35h3M54 40h2M54 47h2" stroke="#5c5858" />
  </>
);

const T304 = (
  <>
    <Para />
    <path d="M17 29.500h11" stroke="#6c6868" strokeWidth="1.300" />
    <path d="M17 33h136" stroke="#a5a1a1" strokeWidth="1.300" strokeDasharray="9 1 6 1" />
    <path d="M60 58h68v27H60zM76 58v27M94 58v27M111 58v27M60 71.500h68" stroke="#b5b1b1" strokeWidth=".8" />
    <path d="M50 50l10 8" stroke="#8a8686" strokeWidth=".8" />
    {txt(54, 51, "AB")}
    {txt(48, 55, "C")}
    {txt(64, 56, "00")}
    {txt(81, 56, "01")}
    {txt(100, 56, "11")}
    {txt(117, 56, "10")}
    {marks(67, 77, 17, 8, 4, 1)}
    {marks(67, 63, 17, 8, 4, 1)}
    <path d="M66 59.500h24v13H66z" stroke="#e6cb4a" strokeWidth="1.400" />
    <path d="M62.500 58h13.500v26H62.500z" stroke="#dc6b2f" strokeWidth="1.400" />
    <path d="M62.500 60h10v10h-10zM117 60h11v10h-11z" stroke="#2fa9c0" strokeWidth="1.400" />
    <path d="M70 57l7-9M74 49l4-1-1 4" stroke="#dc6b2f" strokeWidth="1.200" />
    <path d="M63 67l-23 5M43 70l-3 2 3 2" stroke="#e6c03a" strokeWidth="1.200" />
    <path d="M128 63l5-11M131 54l2-2 1 3" stroke="#2f9fd0" strokeWidth="1.200" />
    {txt(72, 45, "A+B", "#dc5b2f")}
    {txt(130, 49, "B+C", "#2f8fd0")}
    {txt(31, 73, "A+C", "#dc9b3f")}
    {txt(20, 92, "f1= (A+B) (B+C) (A+C)")}
  </>
);

const thumbs: [number, React.ReactNode][] = [
  [300, T300],
  [301, T301],
  [302, T302],
  [303, T303],
  [304, T304],
];

const Up = ({ c = "#6f6b6b" }: { c?: string }) => (
  <Svg w={8} h={4}>
    <path d="M0 4h8L4 0z" fill={c} />
  </Svg>
);

function Thumbnails() {
  return (
    <aside className="flex shrink-0 border-r border-[#cfcaca]">
      <ol className="flex w-[246px] flex-col gap-5 pl-[7px] pt-4">
        {thumbs.map(([n, art]) => (
          <li key={n} className="flex">
            <button className="flex items-start">
              <span className={`w-[35px] text-left text-[16px] leading-3 ${n === 301 ? "text-[#d24726]" : "text-[#5f5b5b]"}`}>{n}</span>
              <span className={n === 301 ? "outline-[3px] outline-[#d24726]" : "outline outline-[#c4c0c0]"}>
                <svg width="181" height="104" viewBox="0 0 182 104" fill="none" className="block bg-[#fefafa]" role="img" aria-label={`Diapositiva ${n}`}>
                  {art}
                </svg>
              </span>
            </button>
          </li>
        ))}
      </ol>
      <div className="mb-[3px] mt-0.5 flex w-[17px] flex-col bg-[#eae7e7]">
        <button aria-label="Subir" className="flex h-[17px] items-center justify-center border border-[#c4c0c0] bg-[#fefafa]">
          <Up />
        </button>
        <div className="mt-[147px] h-[19px] border border-[#b5b1b1] bg-[#fefafa]" />
        <button aria-label="Bajar" className="mt-auto flex h-[17px] items-center justify-center border border-[#c4c0c0] bg-[#fefafa]">
          <Chev />
        </button>
      </div>
      <div className="w-1" />
    </aside>
  );
}

/* ---------- PowerPoint: slide ---------- */

const f1 = [1, 0, 1, 1, 0, 1, 1, 1, 1, 1];

/* text boxes of the Karnaugh map: text, centre x, centre y on the slide canvas */
const boxes: [string, number, number][] = [
  ["AB", 276, 57],
  ["CD", 255, 90],
  ["00", 306, 88],
  ["01", 373, 88],
  ["11", 433, 88],
  ["10", 493, 88],
  ["00", 266, 128],
  ["01", 266, 184],
  ["11", 266, 240],
  ["10", 266, 313],
  ["1", 320, 139],
  ["0", 384, 137],
  ["*", 437, 132],
  ["1", 496, 137],
  ["0", 322, 195],
  ["1", 380, 194],
  ["*", 437, 194],
  ["1", 497, 199],
  ["1", 322, 251],
  ["1", 380, 251],
  ["*", 437, 251],
  ["*", 498, 256],
  ["1", 323, 304],
  ["1", 382, 305],
  ["*", 437, 303],
  ["*", 495, 306],
];

const bigStroke =
  "1393,365 1391,350 1370,345 1330,328 1290,318 1245,315 1235,320 1180,330 1160,340 1140,362 1125,382 1108,415 1108,465 1120,480 1124,505 1128,515 1130,590 1136,620 1136,670 1131,720 1131,800 1125,835 1127,865 1120,880 1120,942 1140,975 1190,1003 1212,1026 1285,1026 1300,1014 1358,1004 1380,975 1393,962 1398,942 1418,900 1432,850 1440,820 1446,790 1447,750 1468,710 1480,670 1492,600 1496,550 1496,450 1488,412 1470,385 1451,345";

const smallStroke =
  "1224,550 1220,543 1190,530 1177,528 1125,508 1100,503 1045,503 1027,530 1010,555 1005,600 1012,625 1013,690 1030,745 1040,765 1085,798 1110,808 1150,814 1188,813 1220,795 1232,775 1240,740 1244,720 1243,668 1238,640 1238,548 1224,546";

function Slide() {
  return (
    <div className="relative mb-[19px] ml-[87px] mr-[85px] mt-3 flex-1 border border-[#cbc6c6] bg-[#fef9fa]">
      <div className="absolute left-[56px] top-[60px] h-[440px] w-[580px] text-[#3a3639]">
        <table className="absolute left-[22px] top-[17px] h-[409px] w-[68px] border-collapse text-center text-[17px] leading-5">
          <thead>
            <tr>
              <th scope="col" className="h-[61px] border-b-[3px] border-[#fef9fa] bg-[#5b98d2] pb-[26px] text-base font-bold leading-5 text-white">
                f1
              </th>
            </tr>
          </thead>
          <tbody>
            {f1.map((v, i) => (
              <tr key={i}>
                <td className={`border-b-2 border-[#fcf8fb] p-0 pb-1 ${i % 2 ? "bg-[#e9e9f0]" : "bg-[#cfd8e9]"}`}>{v}</td>
              </tr>
            ))}
          </tbody>
        </table>
        <div className="absolute left-[289px] top-[106px] grid h-[232px] w-[235px] grid-cols-4 grid-rows-4 gap-0.5 border-2 border-[#40709f] bg-[#40709f]">
          {Array.from({ length: 16 }, (_, i) => (
            <div key={i} className="bg-[#fef9fa]" />
          ))}
        </div>
        {boxes.map(([t, x, y], i) => (
          <span
            key={i}
            className="absolute -translate-x-1/2 -translate-y-1/2 font-['Liberation_Sans',Arial,sans-serif] text-[15px] leading-5"
            style={{ left: x, top: y }}
          >
            {t}
          </span>
        ))}
        <svg className="absolute inset-0" width="580" height="440" viewBox="0 0 1568 1320" preserveAspectRatio="none" fill="none" aria-hidden="true">
          <path d="M680 196L783 320" stroke="#6fa3b8" strokeWidth="4" />
          <g stroke="#e86bb5" strokeWidth="4.500" strokeLinejoin="round" strokeLinecap="round">
            <polyline points={bigStroke} />
            <polyline points={smallStroke} />
          </g>
          <path d="M1214 770l4-16 38-36 8 3-42 46z" fill="#fff" stroke="#5c5858" strokeWidth="3.500" />
        </svg>
      </div>
    </div>
  );
}

function Workspace() {
  return (
    <div className="flex flex-1 bg-linear-to-b from-[#fdf9f9] to-[#efebec]">
      <Thumbnails />
      <main className="flex flex-1">
        <Slide />
        <div className="mt-0.5 flex w-[12px] shrink-0 flex-col items-center">
          <div className="flex h-[558px] w-full flex-col bg-[#eae7e7]">
            <button aria-label="Desplazar arriba" className="flex h-[17px] items-center justify-center border border-r-0 border-[#c4c0c0] bg-[#fefafa]">
              <Up />
            </button>
            <div className="mt-[131px] h-[19px] border border-r-0 border-[#b5b1b1] bg-[#fefafa]" />
            <button aria-label="Desplazar abajo" className="mt-auto flex h-[17px] items-center justify-center border border-r-0 border-[#c4c0c0] bg-[#fefafa]">
              <Chev />
            </button>
          </div>
          <button aria-label="Diapositiva anterior" className="mt-1.5">
            <Up />
            <Up />
          </button>
          <button aria-label="Diapositiva siguiente" className="mt-2.5 flex flex-col items-center">
            <Chev />
            <Chev />
          </button>
        </div>
      </main>
    </div>
  );
}

/* ---------- PowerPoint: status bar ---------- */

function StatusBar() {
  const v = "flex h-full items-center justify-center";
  return (
    <footer className="flex h-[26px] shrink-0 items-center bg-[#d24726] pl-[3px] text-xs text-white">
      <span>DIAPOSITIVA 301 DE 1159</span>
      <Svg w={17} h={15} className="ml-5">
        <path d="M8 2H1v11h6l1 1.500L9 13M8 2v12M8 2l2-1.500h5V13H9M10.500 4.500l5 5M15.500 4.500l-5 5" stroke="#fff" strokeWidth="1.200" />
      </Svg>
      <span className="ml-[18px]">ESPAÑOL (MÉXICO)</span>
      <div className="ml-auto flex h-full items-center">
        <button className="flex items-center gap-[5px]">
          <Svg w={13} h={14}>
            <path d="M3 4l3.500-4L10 4z" fill="#fff" />
            <path d="M0 6.500h13M0 9.500h13M0 13h8" stroke="#fff" />
          </Svg>
          NOTAS
        </button>
        <button className="ml-[22px] flex items-center gap-1">
          <Svg w={14} h={13}>
            <path d="M0 0h14v9H8l-3 4V9H0z" fill="#fff" />
          </Svg>
          COMENTARIOS
        </button>
        <button aria-label="Normal" className={`${v} ml-[22px] w-[41px] bg-[#b3371b]`}>
          <Svg w={16} h={15}>
            <path d="M1 1h14v13H1zM4.500 1v13M5 10.500h10M7 4h5v3.500H7z" stroke="#fff" strokeWidth="1.600" />
          </Svg>
        </button>
        <button aria-label="Clasificador" className={`${v} w-[43px]`}>
          <Svg w={16} h={14}>
            <path d="M0 0h7v6H0zM9 0h7v6H9zM0 8h7v6H0zM9 8h7v6H9z" fill="#fff" />
          </Svg>
        </button>
        <button aria-label="Vista de lectura" className={`${v} w-[42px]`}>
          <Svg>
            <path d="M8 3Q4 0 .5 2v11q4-1.500 7.500 1 3.500-2.500 7.500-1V2Q12 0 8 3zM8 3v11M2 5h4M2 7.500h4M2 10h4M10 5h4M10 7.500h4M10 10h4" stroke="#fff" />
          </Svg>
        </button>
        <button aria-label="Presentación con diapositivas" className={`${v} w-[42px]`}>
          <Svg>
            <path d="M0 1h16M2 1v6.500h12V1M4 4h8M8 8v5M4 14h8" stroke="#fff" strokeWidth="1.300" />
          </Svg>
        </button>
        <button aria-label="Alejar" className={`${v} ml-[3px] w-[15px]`}>
          <span className="h-0.5 w-[7px] bg-white" />
        </button>
        <input
          type="range"
          aria-label="Zoom"
          min={0}
          max={100}
          defaultValue={37}
          className="mx-1 h-4 w-[107px] appearance-none bg-[linear-gradient(#f7d5cb,#f7d5cb)] bg-[length:100%_1px] bg-center bg-no-repeat [&::-webkit-slider-thumb]:h-[13px] [&::-webkit-slider-thumb]:w-[5px] [&::-webkit-slider-thumb]:appearance-none [&::-webkit-slider-thumb]:bg-white"
        />
        <button aria-label="Acercar" className={`${v} w-[10px]`}>
          <Svg w={9} h={9}>
            <path d="M4.500 0v9M0 4.500h9" stroke="#fff" strokeWidth="2" />
          </Svg>
        </button>
        <span className="ml-[15px]">74 %</span>
        <button aria-label="Ajustar" className="ml-4 mr-0.5">
          <Svg w={15} h={15}>
            <path d="M.5 .5h14v14H.5zM7.500 2v3M7.500 10v3M2 7.500h3M10 7.500h3M3 3l2 2M12 3l-2 2M3 12l2-2M12 12l-2-2" stroke="#fff" />
          </Svg>
        </button>
      </div>
    </footer>
  );
}

/* ---------- Windows 7 taskbar in the recording ---------- */

const WinDoc = ({ mail }: { mail?: boolean }) => (
  <Svg w={36} h={34}>
    <rect x="1" y="3" width="33" height="28" rx="1.500" fill="#f3f5f8" stroke="#8a93a0" />
    <path d="M5 9h14v18H5z" fill="#5a9a90" />
    <path d="M5 9h14L5 20z" fill="#4a78a8" />
    <path d="M21 11h7M21 14h7M21 17h7M21 20h7M21 23h7" stroke="#b5b9c0" />
    <path d="M30 9h2v5h-2z" fill="#23558f" />
    <path d="M30 14h2v5h-2z" fill="#5fae4f" />
    <path d="M4 6h20" stroke="#dde" />
    {mail && (
      <>
        <path d="M19 22h17v12H19z" fill="#efa55a" />
        <path d="M19 22l8.500 7 8.500-7" stroke="#fff3e0" strokeWidth="1.500" />
      </>
    )}
  </Svg>
);

const pad = (extra: React.ReactNode) => (
  <Svg w={36} h={34}>
    <path d="M2 12l22-6 8 18-20 8z" fill="#fafafa" stroke="#3a3a3a" strokeWidth="1.500" />
    {extra}
  </Svg>
);

const apps: { name: string; kind: 0 | 1 | 2; icon: React.ReactNode }[] = [
  {
    name: "Carpetas",
    kind: 1,
    icon: (
      <Svg w={36} h={34}>
        <path d="M1 4h12l2 3h20v26H1z" fill="#e9cd74" />
        <path d="M4 2h8l1 3h9l1 3h10v8H4z" fill="#f6ecb8" />
        <path d="M3 3h6v3H3z" fill="#2faa3a" />
        <path d="M12 5h6v2h-6z" fill="#c24b2f" />
        <path d="M23 6h6v2h-6z" fill="#3f6fc2" />
        <path d="M1 10h34v22H1z" fill="#f3e08f" />
        <path d="M6 34V23q0-2 2-2h20q2 0 2 2v11h-5v-7H11v7z" fill="#86cfe8" stroke="#4f9fc0" />
      </Svg>
    ),
  },
  { name: "Documento", kind: 1, icon: <WinDoc /> },
  {
    name: "Internet Explorer",
    kind: 0,
    icon: (
      <Svg w={36} h={36}>
        <path d="M7 20a11.500 11.500 0 1 1 23 0H9M29 26a12 12 0 0 1-22-6" stroke="#2f97d4" strokeWidth="6" />
        <path d="M7 20a11.500 11.500 0 1 1 23 0H9M29 26a12 12 0 0 1-22-6" stroke="#6fcdf4" strokeWidth="3" />
        <path d="M2 33C-2 24 14 4 29 2c5 0 4 4 2 8 1-4 0-5-3-4C16 9 4 24 5 32z" fill="#e9c845" />
      </Svg>
    ),
  },
  { name: "Chrome", kind: 2, icon: <ChromeIcon s={34} /> },
  { name: "Ventana", kind: 1, icon: <WinDoc /> },
  {
    name: "Ratón",
    kind: 0,
    icon: (
      <Svg w={36} h={36}>
        <path d="M3 17l20-4 9 16-19 6z" fill="#fafafa" stroke="#222" strokeWidth="2" />
        <path d="M10 22l18-5M13 28l17-5M14 15l7 18M21 14l8 16" stroke="#999" />
        <path d="M14 24l5 1 3-2" stroke="#d0202f" strokeWidth="2" />
        <path d="M11 6q6-4 9 3l3 9q-4 6-9 1z" fill="#fff" stroke="#111" strokeWidth="2" />
        <path d="M32 4L23 20M11 6L7 1l-3 2" stroke="#111" strokeWidth="5" />
        <path d="M32 5L24 19" stroke="#eee" strokeWidth="2.500" />
      </Svg>
    ),
  },
  { name: "Correo", kind: 2, icon: <WinDoc mail /> },
  {
    name: "Opera",
    kind: 0,
    icon: (
      <Svg w={34} h={36}>
        <path fillRule="evenodd" d="M17 1a16 17 0 1 0 .1 0zM17 7c5 0 7 5 7 11s-2 11-7 11-7-5-7-11 2-11 7-11z" fill="#d9142a" />
        <path d="M22 5c6 5 6 21 0 26 6-2 10-7 10-13S28 7 22 5z" fill="#ee4a55" />
      </Svg>
    ),
  },
  { name: "Ventana 2", kind: 2, icon: <WinDoc /> },
  {
    name: "Firma",
    kind: 0,
    icon: pad(
      <>
        <path d="M9 22q6-6 8 0t6-2" stroke="#7aa82f" strokeWidth="2" />
        <path d="M32 3L20 20" stroke="#333" strokeWidth="6" strokeLinecap="round" />
        <path d="M31 5l-4 6" stroke="#999" strokeWidth="2" />
      </>,
    ),
  },
  {
    name: "Casa",
    kind: 0,
    icon: (
      <Svg w={36} h={34}>
        <path d="M7 15L18 5l11 10v16H7z" fill="#f7f7f7" stroke="#bbb" />
        <path d="M1 18L18 2l17 16-3 1L18 7 4 19z" fill="#4da7cf" />
        <path d="M16 18h6v13h-6z" fill="#a82a35" />
        <circle cx="5" cy="25" r="4.500" fill="#5a8f2a" />
        <path d="M2 31h32v2H2z" fill="#c9c9c9" />
      </Svg>
    ),
  },
  {
    name: "Notas",
    kind: 0,
    icon: pad(
      <>
        <path d="M2 12l22-6 1 3L3 15z" fill="#2c4a7a" />
        <path d="M8 20h2M9 24h2M11 28h2" stroke="#999" />
        <path d="M14 20l5 2 5-4" stroke="#d0202f" strokeWidth="2" />
        <path d="M31 2l-8 16" stroke="#777" strokeWidth="4" strokeLinecap="round" />
        <path d="M31 2l-8 16" stroke="#eee" strokeWidth="2" strokeLinecap="round" />
      </>,
    ),
  },
  {
    name: "Archivo",
    kind: 2,
    icon: (
      <Svg w={28} h={34}>
        <path d="M1 2h18l7 7v24H1z" fill="#fbfbfb" stroke="#d0d0d0" />
        <path d="M19 2v7h7z" fill="#ddd" stroke="#999" />
      </Svg>
    ),
  },
  {
    name: "Aviso",
    kind: 1,
    icon: (
      <Svg w={34} h={34}>
        <path d="M17 4l15 28H2z" fill="#f6c81a" stroke="#c79a10" strokeWidth="1.500" strokeLinejoin="round" />
        <path d="M15 12h5l-1 12h-3z" fill="#222" />
        <circle cx="17.500" cy="28" r="2" fill="#222" />
      </Svg>
    ),
  },
  {
    name: "Zoom",
    kind: 2,
    icon: (
      <Svg w={34} h={34}>
        <rect width="34" height="34" rx="11" fill="#3f8cf3" />
        <rect x="7" y="11" width="14" height="12" rx="3" fill="#fff" />
        <path d="M22.500 15.500L27 12v10l-4.500-3.500z" fill="#fff" />
      </Svg>
    ),
  },
];

function Win7Bar() {
  const glass = "mx-0.5 flex h-full flex-1 items-center justify-center rounded-t-sm border border-b-0 border-[#5f7390] bg-linear-to-br from-[#e0e8f4] to-[#aabbd7] pt-1";
  return (
    <div className="flex h-[38px] shrink-0 overflow-hidden bg-[#a5b9d9]">
      <button aria-label="Menú Inicio" className="flex w-[59px] items-center bg-[#8397b2] pl-1 pt-1">
        <Svg w={40} h={40}>
          <defs>
            <radialGradient id="orb" cx=".5" cy=".9">
              <stop offset="0" stopColor="#5fd0f5" />
              <stop offset=".5" stopColor="#1f6fae" />
              <stop offset="1" stopColor="#16446f" />
            </radialGradient>
          </defs>
          <circle cx="20" cy="21" r="18.500" fill="url(#orb)" stroke="#46607d" />
          <path d="M5 15q15-18 30 0-15 6-30 0z" fill="#fff" opacity=".35" />
          <path d="M12 12q4-3 8-1l-2 8q-4-2-8 1z" fill="#ea5a2a" />
          <path d="M21.500 12q4 2 8 0l-2 8q-4 2-8 0z" fill="#8cc63f" />
          <path d="M9.500 22q4-3 8-1l-2 8q-4-2-8 1z" fill="#4aa3e8" />
          <path d="M19 22q4 2 8 0l-2 8q-4 2-8 0z" fill="#fbc927" />
        </Svg>
      </button>
      <nav className="grid w-[1032px] shrink-0 grid-cols-15">
        {apps.map((a) => (
          <button key={a.name} aria-label={a.name} className="flex h-full items-center">
            {a.kind === 0 ? (
              <span className="flex flex-1 justify-center pt-1">{a.icon}</span>
            ) : a.kind === 1 ? (
              <span className={glass}>{a.icon}</span>
            ) : (
              <>
                <span className={glass}>{a.icon}</span>
                <span className="mr-1.5 h-full w-1 border-x border-[#6f83a0]" />
              </>
            )}
          </button>
        ))}
      </nav>
      <div className="flex flex-1 items-center justify-end bg-linear-to-r from-[#a5b9d9] from-22% to-[#8094b0] to-32% text-white">
        <span className="text-[#dbe4f0]">ES</span>
        <Svg w={9} h={5} className="ml-5 mt-1.5">
          <path d="M0 5h9L4.500 0z" fill="#fff" />
        </Svg>
        <Svg w={18} h={15} className="ml-[14px] mt-1.5">
          <path d="M1.500 15v-3M5 15v-5M8.500 15V7M12 15V4M15.500 15V1" stroke="#fff" strokeWidth="2.200" />
        </Svg>
        <Svg w={17} h={16} className="ml-[9px] mt-1.5">
          <path d="M0 5h3l5-5v16l-5-5H0z" fill="#fff" />
          <path d="M10 5q2 3 0 6M12.500 3q3.500 5 0 10" stroke="#fff" strokeWidth="1.300" />
        </Svg>
        <Svg w={18} h={18} className="ml-[10px] mt-1.5">
          <path d="M1 0v18" stroke="#fff" strokeWidth="2" />
          <path d="M3 2q4-2 7 0t5 0v8q-2 1-5 0t-7 0z" fill="#eef2f7" />
          <circle cx="12.500" cy="12.500" r="5" fill="#c8303a" />
          <path d="M10.500 10.500l4 4M14.500 10.500l-4 4" stroke="#fff" strokeWidth="1.500" />
        </Svg>
        <Svg w={17} h={17} className="ml-[9px] mt-1.5">
          <path d="M8 2H1v13h6" stroke="#fff" strokeWidth="2" />
          <path d="M8 5h8v4q0 3-3 3v5h-2v-5q-3 0-3-3zM9 1h2v3H9zM13 1h2v3h-2z" fill="#fff" />
        </Svg>
        <div className="ml-[17px] w-[68px] pt-1 text-center text-xs leading-[18px]">
          <time className="block">10:21 a.m.</time>
          <time className="block">12/06/2021</time>
        </div>
        <button aria-label="Mostrar escritorio" className="ml-[11px] h-full w-[21px] border-l border-[#4c5c74] bg-linear-to-b from-[#8b9bb3] to-[#5c6b84]" />
      </div>
    </div>
  );
}

/* ---------- SMPlayer playback controls ---------- */

const track =
  "h-[14px] min-w-0 appearance-none rounded border border-[#1f55a0] bg-white bg-[linear-gradient(to_bottom,#9dbfee,#4f83c8_50%,#1c4f9e)] bg-no-repeat [&::-webkit-slider-runnable-track]:h-3 [&::-webkit-slider-thumb]:-mt-1 [&::-webkit-slider-thumb]:h-5 [&::-webkit-slider-thumb]:w-[7px] [&::-webkit-slider-thumb]:appearance-none [&::-webkit-slider-thumb]:rounded-xs [&::-webkit-slider-thumb]:border [&::-webkit-slider-thumb]:border-[#6e6e6e] [&::-webkit-slider-thumb]:bg-[#dbe7f8]";

const BigDrop = () => (
  <Svg w={16} h={9}>
    <path d="M0 0h16L8 9z" fill="#1c1c1c" stroke="#777" strokeWidth=".6" />
  </Svg>
);

function Controls() {
  return (
    <>
      <div className="flex h-[53px] shrink-0 items-center bg-linear-to-b from-[#c8d7e3] via-[#93a3ad] to-[#58686e] pb-0.5 pl-[9px] pr-[3px]">
        <button aria-label="Pausa">
          <RoundFace s={40}>
            <path d="M14 13h4v14h-4zM22 13h4v14h-4z" fill="url(#glyph)" />
          </RoundFace>
        </button>
        <button aria-label="Detener" className="ml-4">
          <RoundFace s={40}>
            <path d="M13 13h14v14H13z" fill="url(#glyph)" />
          </RoundFace>
        </button>
        <button aria-label="Retroceder" className="ml-[17px]">
          <RoundFace s={40}>
            <path d="M20 11v18l-10-9zM28 12v16l-8-8z" fill="url(#glyph)" />
          </RoundFace>
        </button>
        <button aria-label="Opciones de retroceso" className="ml-1">
          <BigDrop />
        </button>
        <input type="range" aria-label="Posición" min={0} max={12622} defaultValue={9727} className={`${track} ml-[9px] flex-1 bg-[length:77%_100%]`} />
        <button aria-label="Avanzar" className="ml-2">
          <RoundFace s={40}>
            <path d="M12 12v16l8-8zM20 11v18l10-9z" fill="url(#glyph)" />
          </RoundFace>
        </button>
        <button aria-label="Opciones de avance" className="ml-1">
          <BigDrop />
        </button>
        <button aria-label="Pantalla completa" className="ml-[19px]">
          <Svg w={37} h={32}>
            <path d="M0 0h37v32H0z" fill="#fff" />
            <path d="M0 0h37v8H0z" fill="#d5d5d5" />
            <path d="M3 4.500h3M23 4.500h3M28 4.500h3M33 4.500h2" stroke="#f5f5f5" strokeWidth="2.500" />
            <g fill="#c4121a">
              <path d="M3 11h8l-8 8zM34 11h-8l8 8zM3 30v-8l8 8zM34 30v-8l-8 8z" />
              <path d="M5 13l5 6M32 13l-5 6M5 28l5-5M32 28l-5-5" stroke="#c4121a" strokeWidth="2.500" />
            </g>
          </Svg>
        </button>
        <button aria-label="Silenciar" className="ml-4">
          <Svg w={38} h={36}>
            <defs>
              <linearGradient id="cone" x1="0" x2="1" y1="0" y2="0">
                <stop offset="0" stopColor="#8f8f8f" />
                <stop offset=".5" stopColor="#fafafa" />
                <stop offset="1" stopColor="#777" />
              </linearGradient>
            </defs>
            <path d="M2 12h7v14H2z" fill="#b5a05a" stroke="#666" />
            <path d="M5 12h5v14H5z" fill="#ffc800" />
            <path d="M9 12L20 1h5v35h-5L9 26z" fill="url(#cone)" stroke="#666" />
            <path d="M27 13q4 5 0 11M31 9q7 9 0 19" stroke="#35cc1a" strokeWidth="2.200" />
          </Svg>
        </button>
        <input type="range" aria-label="Volumen" min={0} max={100} defaultValue={65} className={`${track} ml-[11px] w-[84px] bg-[length:65%_100%]`} />
      </div>
      <div className="flex h-[26px] shrink-0 items-center justify-end pr-1 font-['Open_Sans',sans-serif] text-[19px] font-bold italic leading-none text-white">
        <output>02:42:07 / 03:30:22</output>
      </div>
    </>
  );
}

export default function App() {
  return (
    <div className="flex min-h-screen flex-col bg-black font-[Roboto,'Open_Sans',sans-serif]">
      <SystemBar />
      <PlayerChrome />
      <section className="relative mx-[82px] flex flex-1 flex-col border-[5px] border-l-[6px] border-[#8cb82b] bg-[#fefafa] font-['Open_Sans','Noto_Sans',sans-serif] text-xs">
        <PptTitle />
        <PptTabs />
        <Ribbon />
        <Workspace />
        <StatusBar />
        <Win7Bar />
        <Svg w={9} h={9} className="absolute -bottom-[5px] -left-[5px]">
          <path d="M0 0l8 9H0z" fill="#fff" />
        </Svg>
      </section>
      <Controls />
    </div>
  );
}
